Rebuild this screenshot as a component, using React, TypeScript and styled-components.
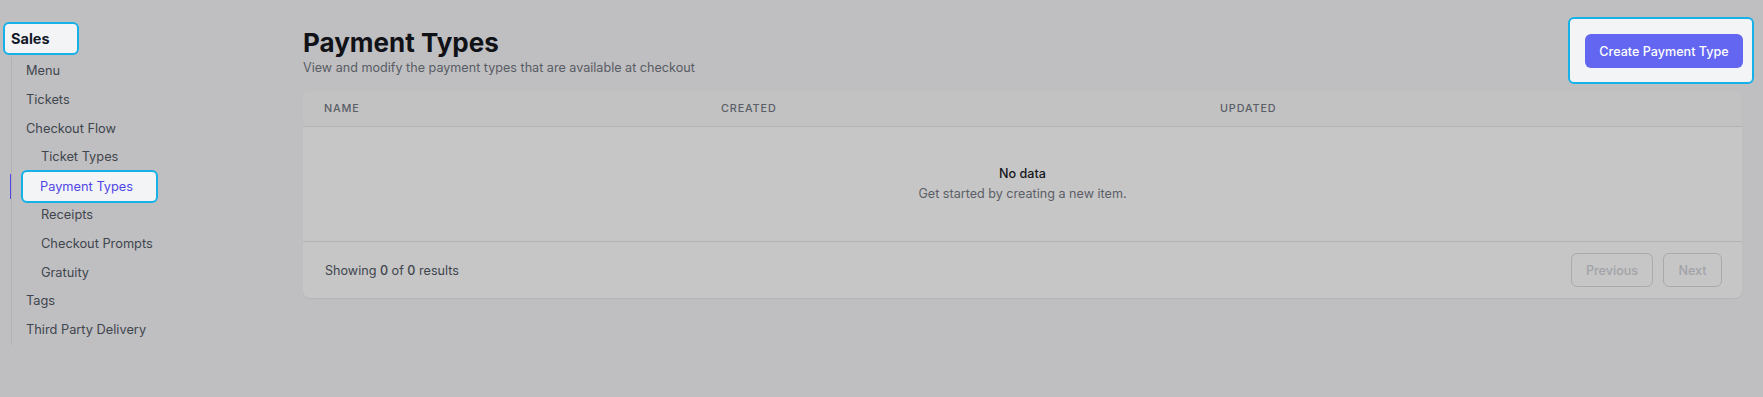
import styled, { createGlobalStyle } from 'styled-components';

const GlobalStyle = createGlobalStyle`
  body {
    margin: 0;
    font-family: Inter, 'Noto Sans', sans-serif;
    background: #bfbfc1;
  }
`;

const Page = styled.div`
  display: flex;
  min-height: 397px;
  background: #bfbfc1;
`;

const Sidebar = styled.nav`
  width: 300px;
  padding: 22px 0 0 3px;
  flex-shrink: 0;
`;

const Spotlight = styled.div`
  background: #f3f4f6;
  border: 2px solid #16b1e9;
  border-radius: 6px;
  box-sizing: border-box;
`;

const SectionTitle = styled(Spotlight)`
  width: 76px;
  height: 33px;
  padding-left: 6px;
  font-size: 14.5px;
  font-weight: 700;
  line-height: 29px;
  color: #111827;
`;

const Tree = styled.ul`
  list-style: none;
  margin: 2px 0 0 8px;
  padding: 0;
  border-left: 1px solid #b2b2b5;
`;

const Item = styled.li<{ $depth: number }>`
  height: 28.8px;
  line-height: 28.8px;
  padding-left: ${(p) => (p.$depth === 2 ? 29 : 14)}px;
  font-size: 12.8px;
  color: #40454e;
`;

const ActiveItem = styled.li`
  position: relative;
  height: 28.8px;
  display: flex;
  align-items: center;

  &::before {
    content: '';
    position: absolute;
    left: -2px;
    top: 2px;
    bottom: 2px;
    width: 1px;
    background: #4f46e5;
  }
`;

const ActiveLabel = styled(Spotlight)`
  margin-left: 9px;
  width: 137px;
  height: 33px;
  padding-left: 17px;
  font-size: 12.8px;
  line-height: 29px;
  color: #4f46e5;
`;

const Main = styled.main`
  flex: 1;
  padding-right: 21px;
`;

const HeaderRow = styled.div`
  display: flex;
  justify-content: space-between;
  align-items: flex-start;
`;

const TitleBlock = styled.div`
  padding-top: 28px;
`;

const Title = styled.h1`
  margin: 0;
  font-size: 26px;
  font-weight: 700;
  line-height: 30px;
  color: #101218;
`;

const Subtitle = styled.p`
  margin: 0;
  font-size: 12.6px;
  line-height: 19px;
  color: #585c64;
`;

const ActionSpot = styled(Spotlight)`
  margin: 17px -12px 0 0;
  padding: 15px 9px 14px 15px;
`;

const PrimaryButton = styled.button`
  width: 158px;
  height: 34px;
  border: none;
  border-radius: 6px;
  background: #6366f1;
  color: #ffffff;
  font-family: inherit;
  font-size: 12.6px;
  font-weight: 500;
`;

const Card = styled.section`
  margin-top: 7px;
  background: #c6c6c6;
  border-radius: 7px;
  overflow: hidden;
  box-shadow: 0 1px 1px rgba(0, 0, 0, 0.06);
`;

const TableHead = styled.div`
  display: grid;
  grid-template-columns: 397px 499px 1fr;
  height: 35px;
  align-items: center;
  padding-left: 21px;
  background: #c2c2c3;
  border-bottom: 1px solid #b3b3b5;
`;

const HeadCell = styled.span`
  font-size: 10.8px;
  font-weight: 500;
  letter-spacing: 0.08em;
  text-transform: uppercase;
  color: #5b5e66;
`;

const Empty = styled.div`
  padding: 37px 0 37px;
  text-align: center;
  border-bottom: 1px solid #b3b3b5;
`;

const EmptyTitle = styled.div`
  font-size: 12.6px;
  font-weight: 500;
  line-height: 20px;
  color: #15171c;
`;

const EmptyText = styled.div`
  font-size: 12.6px;
  line-height: 20px;
  color: #5b5e66;
`;

const Footer = styled.div`
  display: flex;
  justify-content: space-between;
  align-items: center;
  height: 56px;
  padding: 0 20px 0 22px;
`;

const Summary = styled.span`
  font-size: 12.6px;
  color: #40454e;

  b {
    font-weight: 500;
  }
`;

const Pager = styled.div`
  display: flex;
  gap: 10px;
`;

const PageButton = styled.button<{ $width: number }>`
  width: ${(p) => p.$width}px;
  height: 34px;
  border: 1px solid #a9a9ae;
  border-radius: 6px;
  background: transparent;
  color: #a2a3a8;
  font-family: inherit;
  font-size: 12.6px;
  font-weight: 500;
`;

export default function App() {
  return (
    <Page>
      <GlobalStyle />
      <Sidebar>
        <SectionTitle>Sales</SectionTitle>
        <Tree>
          <Item $depth={1}>Menu</Item>
          <Item $depth={1}>Tickets</Item>
          <Item $depth={1}>Checkout Flow</Item>
          <Item $depth={2}>Ticket Types</Item>
          <ActiveItem>
            <ActiveLabel>Payment Types</ActiveLabel>
          </ActiveItem>
          <Item $depth={2}>Receipts</Item>
          <Item $depth={2}>Checkout Prompts</Item>
          <Item $depth={2}>Gratuity</Item>
          <Item $depth={1}>Tags</Item>
          <Item $depth={1}>Third Party Delivery</Item>
        </Tree>
      </Sidebar>
      <Main>
        <HeaderRow>
          <TitleBlock>
            <Title>Payment Types</Title>
            <Subtitle>View and modify the payment types that are available at checkout</Subtitle>
          </TitleBlock>
          <ActionSpot>
            <PrimaryButton>Create Payment Type</PrimaryButton>
          </ActionSpot>
        </HeaderRow>
        <Card>
          <TableHead>
            <HeadCell>Name</HeadCell>
            <HeadCell>Created</HeadCell>
            <HeadCell>Updated</HeadCell>
          </TableHead>
          <Empty>
            <EmptyTitle>No data</EmptyTitle>
            <EmptyText>Get started by creating a new item.</EmptyText>
          </Empty>
          <Footer>
            <Summary>
              Showing <b>0</b> of <b>0</b> results
            </Summary>
            <Pager>
              <PageButton $width={82}>Previous</PageButton>
              <PageButton $width={59}>Next</PageButton>
            </Pager>
          </Footer>
        </Card>
      </Main>
    </Page>
  );
}
